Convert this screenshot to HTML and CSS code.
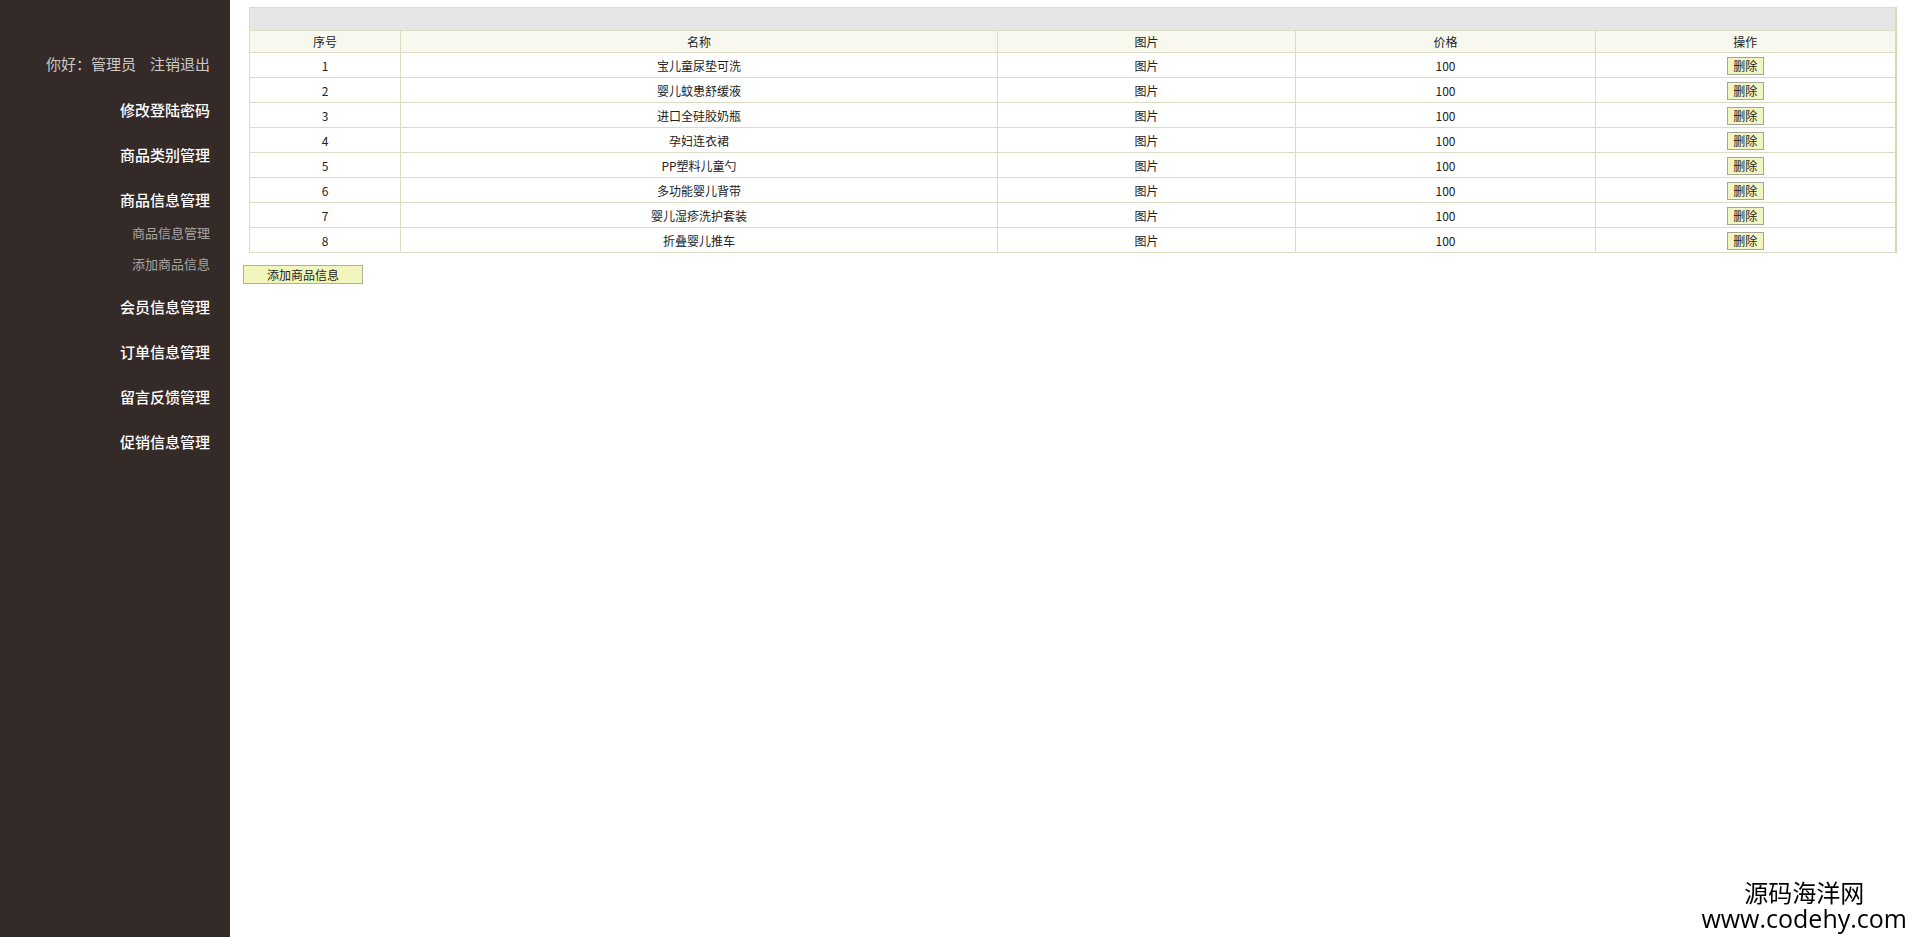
FILE: index.html
```html
<!DOCTYPE html>
<html lang="zh-CN">
<head>
<meta charset="utf-8">
<title>商品信息管理</title>
<link rel="stylesheet" href="styles.css">
</head>
<body>
<div class="layout">
  <aside class="sidebar">
    <div class="greeting">你好：管理员<span class="gap"></span>注销退出</div>
    <ul class="menu">
      <li class="menu-item">修改登陆密码</li>
      <li class="menu-item">商品类别管理</li>
      <li class="menu-item menu-open">商品信息管理</li>
      <li class="sub-item">商品信息管理</li>
      <li class="sub-item sub-last">添加商品信息</li>
      <li class="menu-item">会员信息管理</li>
      <li class="menu-item">订单信息管理</li>
      <li class="menu-item">留言反馈管理</li>
      <li class="menu-item">促销信息管理</li>
    </ul>
  </aside>
  <main class="content">
    <table class="grid">
      <colgroup>
        <col class="c1"><col class="c2"><col class="c3"><col class="c4"><col class="c5">
      </colgroup>
      <thead>
        <tr class="bar"><td colspan="5"></td></tr>
        <tr class="head"><th>序号</th><th>名称</th><th>图片</th><th>价格</th><th>操作</th></tr>
      </thead>
      <tbody>
        <tr><td>1</td><td>宝儿童尿垫可洗</td><td>图片</td><td>100</td><td><button class="del">删除</button></td></tr>
        <tr><td>2</td><td>婴儿蚊患舒缓液</td><td>图片</td><td>100</td><td><button class="del">删除</button></td></tr>
        <tr><td>3</td><td>进口全硅胶奶瓶</td><td>图片</td><td>100</td><td><button class="del">删除</button></td></tr>
        <tr><td>4</td><td>孕妇连衣裙</td><td>图片</td><td>100</td><td><button class="del">删除</button></td></tr>
        <tr><td>5</td><td>PP塑料儿童勺</td><td>图片</td><td>100</td><td><button class="del">删除</button></td></tr>
        <tr><td>6</td><td>多功能婴儿背带</td><td>图片</td><td>100</td><td><button class="del">删除</button></td></tr>
        <tr><td>7</td><td>婴儿湿疹洗护套装</td><td>图片</td><td>100</td><td><button class="del">删除</button></td></tr>
        <tr><td>8</td><td>折叠婴儿推车</td><td>图片</td><td>100</td><td><button class="del">删除</button></td></tr>
      </tbody>
    </table>
    <button class="add">添加商品信息</button>
  </main>
</div>
<div class="watermark">
  <div class="wm-cn">源码海洋网</div>
  <div class="wm-url">www.codehy.com</div>
</div>
</body>
</html>
```

FILE: styles.css
```css
html, body {
  margin: 0;
  padding: 0;
  height: 100%;
  background: #ffffff;
  font-family: "Noto Sans CJK SC", "Noto Sans", sans-serif;
}

.layout {
  display: flex;
  min-height: 937px;
}

.sidebar {
  width: 230px;
  flex: 0 0 230px;
  background: #342a28;
  padding-top: 41px;
  box-sizing: border-box;
}

.greeting {
  height: 46px;
  line-height: 46px;
  font-size: 15px;
  color: #cdc9c7;
  text-align: right;
  padding-right: 20px;
}

.gap {
  display: inline-block;
  width: 14px;
}

.menu {
  list-style: none;
  margin: 0;
  padding: 0;
}

.menu-item {
  height: 45px;
  line-height: 45px;
  font-size: 15px;
  color: #ffffff;
  font-weight: 500;
  text-align: right;
  padding-right: 20px;
}

.menu-open {
  height: 40px;
  line-height: 46px;
}

.sub-item {
  height: 31px;
  line-height: 31px;
  font-size: 13px;
  color: #a8a4a2;
  text-align: right;
  padding-right: 20px;
}

.sub-last {
  margin-bottom: 5px;
}

.content {
  flex: 1;
  padding: 7px 16px 0 13px;
  box-sizing: border-box;
}

.grid {
  margin-left: 6px;
  width: 1646px;
  border-collapse: collapse;
  table-layout: fixed;
  font-size: 12px;
  color: #222;
  border: 1px solid #dcdcc4;
  border-right: 2px solid #d6dab4;
}

.c1 { width: 151px; }
.c2 { width: 597px; }
.c3 { width: 298px; }
.c4 { width: 300px; }
.c5 { width: 300px; }

.grid td, .grid th {
  border: 1px solid #dcdcc4;
  text-align: center;
  padding: 0;
  font-weight: normal;
}

.bar td {
  height: 22px;
  background: #e6e6e6;
  border-left: none;
  border-right: none;
}

.head th {
  height: 21px;
  background: #f8f8ee;
}

.grid tbody td {
  height: 24px;
}

.del {
  font-family: "Noto Sans CJK SC", sans-serif;
  font-size: 12px;
  width: 37px;
  height: 18px;
  padding: 0;
  line-height: 16px;
  background: #f2f5c2;
  border: 1px solid #a6a696;
  color: #222;
  vertical-align: middle;
}

.add {
  display: block;
  margin-top: 12px;
  width: 120px;
  height: 19px;
  padding: 0;
  font-family: "Noto Sans CJK SC", sans-serif;
  font-size: 12px;
  line-height: 17px;
  background: #f2f6bd;
  border: 1px solid #b0b094;
  color: #222;
}

.watermark {
  position: fixed;
  right: 4px;
  bottom: 6px;
  text-align: center;
  color: #000;
}

.wm-cn {
  font-family: "Noto Sans CJK SC", sans-serif;
  font-size: 24px;
  line-height: 26px;
}

.wm-url {
  font-family: "Open Sans", "Noto Sans", sans-serif;
  font-size: 25px;
  line-height: 26px;
}
```
